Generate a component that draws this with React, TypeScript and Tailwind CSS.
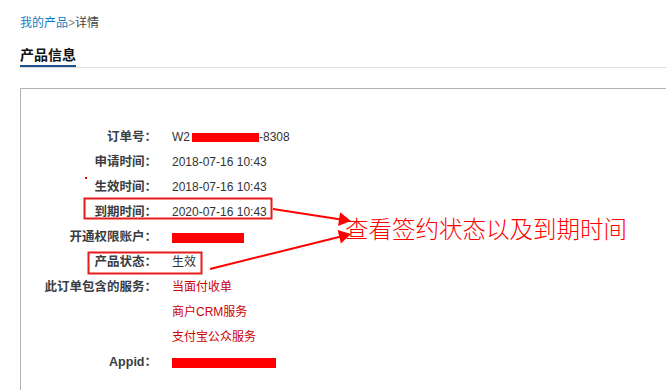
const font = { fontFamily: '"Liberation Sans", "Noto Sans CJK SC", sans-serif' };

type Row = { label: string; value: React.ReactNode };

function Redact({ w }: { w: number }) {
  return <span className="inline-block h-[10px] bg-[#ff0000] align-middle" style={{ width: w }} />;
}

export default function App() {
  const rows: Row[] = [
    {
      label: '订单号：',
      value: (
        <span className="flex items-center">
          W2
          <span className="ml-[2px] inline-block h-[9px] w-[67px] bg-[#ff0000]" />
          -8308
        </span>
      ),
    },
    { label: '申请时间：', value: '2018-07-16 10:43' },
    { label: '生效时间：', value: '2018-07-16 10:43' },
    { label: '到期时间：', value: '2020-07-16 10:43' },
    { label: '开通权限账户：', value: <Redact w={72} /> },
    { label: '产品状态：', value: '生效' },
    {
      label: '此订单包含的服务：',
      value: (
        <div className="flex flex-col text-[#cc0000]">
          <span className="h-[25px] leading-[25px]">当面付收单</span>
          <span className="h-[25px] leading-[25px]">商户CRM服务</span>
          <span className="h-[25px] leading-[25px]">支付宝公众服务</span>
        </div>
      ),
    },
    { label: 'Appid：', value: <Redact w={104} /> },
  ];

  return (
    <div className="relative h-[390px] w-[666px] overflow-hidden bg-white text-[12px] text-[#333]" style={font}>
      <div className="px-[20px] pt-[14px] leading-[18px]">
        <span className="text-[#0e7cc6]">我的产品</span>
        <span className="text-[#888]">&gt;</span>
        <span className="text-[#444]">详情</span>
      </div>

      <div className="ml-[20px] mt-[13px] border-b border-[#dddddd]">
        <span className="inline-block border-b-2 border-[#1f4e8c] text-[14px] font-bold leading-[20px] text-[#111]">
          产品信息
        </span>
      </div>

      <div className="ml-[20px] mt-[20px] border-l border-t border-[#b3b3b3] pt-[36px] pb-[30px]">
        {rows.map((r) => (
          <div key={r.label} className="flex">
            <div className="w-[136px] shrink-0 text-right text-[12.5px] font-bold leading-[25px] text-[#3a3d42]">
              {r.label}
            </div>
            <div className="ml-[15px] flex min-h-[25px] items-start leading-[25px]">
              {typeof r.value === 'string' ? (
                <div className="flex h-[25px] items-center">{r.value}</div>
              ) : (
                <div className="flex min-h-[25px] items-center">{r.value}</div>
              )}
            </div>
          </div>
        ))}
      </div>

      <svg className="pointer-events-none absolute left-0 top-0" width="666" height="390">
        <rect x="84.5" y="198.5" width="187" height="20" fill="none" stroke="#e81c1c" strokeWidth="2" />
        <rect x="88.5" y="252.5" width="113" height="21" fill="none" stroke="#e81c1c" strokeWidth="2" />
        <line x1="273" y1="209" x2="341" y2="219.5" stroke="#ff0000" strokeWidth="2" />
        <polygon points="351,221 338.1,226.1 340.1,212.3" fill="#ff0000" />
        <line x1="210" y1="269" x2="341" y2="236.5" stroke="#ff0000" strokeWidth="2" />
        <polygon points="351,234 340.9,243.6 337.6,230" fill="#ff0000" />
        <rect x="85" y="177" width="2" height="2" fill="#ff0000" />
      </svg>

      <div
        className="absolute left-[345px] top-[217px] whitespace-nowrap text-[23.5px] font-light leading-none text-[#ff0000]"
        style={{ fontFamily: '"Noto Sans CJK SC", sans-serif' }}
      >
        查看签约状态以及到期时间
      </div>
    </div>
  );
}
